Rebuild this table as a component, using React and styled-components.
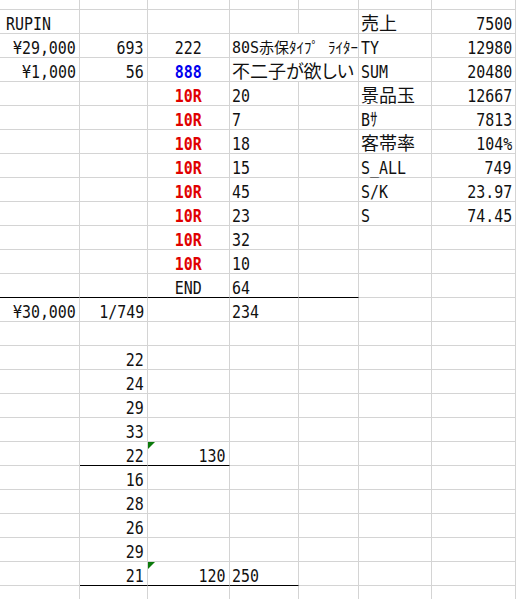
import React from 'react';
import styled, { createGlobalStyle, css } from 'styled-components';

const GlobalStyle = createGlobalStyle`
	html, body {
		margin: 0;
		padding: 0;
		background: #fff;
		overflow: hidden;
	}

	body {
		font-family: 'DejaVu Sans Mono', 'Noto Sans CJK JP', monospace;
		font-size: 18px;
		color: #111;
	}
`;

const GRID = '#d4d4d4';

const Sheet = styled.div`
	display: grid;
	grid-template-columns: 80px 68px 82px 69px 60px 73px 84px 1fr;
	grid-template-rows: 10px;
	grid-auto-rows: 24px;
	width: 100%;
	height: 599px;
	overflow: hidden;
`;

const tones = {
	red: css`
		color: #e00000;
		font-weight: bold;
	`,
	blue: css`
		color: #0000ee;
		font-weight: bold;
	`,
};

const origins = { left: 'left', right: 'right', center: 'center' };

const Cell = styled.div`
	position: relative;
	box-sizing: border-box;
	display: flex;
	align-items: flex-end;
	justify-content: ${(p) =>
		p.$align === 'right' ? 'flex-end' : p.$align === 'center' ? 'center' : 'flex-start'};
	grid-column: span ${(p) => p.$span || 1};
	padding: 0 ${(p) => (p.$align === 'right' ? '3px' : '2px')} 0 ${(p) => (p.$first ? '6px' : '2px')};
	border-right: 1px solid ${GRID};
	border-bottom: 1px solid ${(p) => (p.$rule ? '#000' : GRID)};
	line-height: 18px;
	white-space: nowrap;
	${(p) => p.$tone && tones[p.$tone]}
	${(p) =>
		p.$small &&
		css`
			font-size: 15px;
		`}
	${(p) =>
		p.$kana &&
		css`
			font-feature-settings: 'palt';
		`}
	${(p) =>
		p.$flag &&
		css`
			&::before {
				content: '';
				position: absolute;
				top: 0;
				left: 0;
				border-top: 7px solid #0b7a0b;
				border-right: 7px solid transparent;
			}
		`}
`;

// half-width characters in the sheet are 9px wide; squeeze the mono face to that
const Text = styled.span`
	display: inline-block;
	transform: ${(p) => (p.$wide ? 'none' : 'scaleX(0.83)')};
	transform-origin: ${(p) => origins[p.$align]} bottom;
`;

// one entry per row: [column index, text, options]
const rows = [
	[],
	[[0, 'RUPIN', { align: 'left' }], [5, '売上', { align: 'left', wide: true }], [6, '7500']],
	[
		[0, '¥29,000'],
		[1, '693'],
		[2, '222', { align: 'center' }],
		[3, '80S赤保ﾀｲﾌﾟ ﾗｲﾀｰ', { align: 'left', span: 2, small: true, wide: true }],
		[5, 'TY', { align: 'left' }],
		[6, '12980'],
	],
	[
		[0, '¥1,000'],
		[1, '56'],
		[2, '888', { align: 'center', tone: 'blue' }],
		[3, '不二子が欲しい', { align: 'left', span: 2, kana: true, wide: true }],
		[5, 'SUM', { align: 'left' }],
		[6, '20480'],
	],
	[[2, '10R', { align: 'center', tone: 'red' }], [3, '20', { align: 'left' }], [5, '景品玉', { align: 'left', wide: true }], [6, '12667']],
	[[2, '10R', { align: 'center', tone: 'red' }], [3, '7', { align: 'left' }], [5, 'Bｻ', { align: 'left' }], [6, '7813']],
	[[2, '10R', { align: 'center', tone: 'red' }], [3, '18', { align: 'left' }], [5, '客帯率', { align: 'left', wide: true }], [6, '104%']],
	[[2, '10R', { align: 'center', tone: 'red' }], [3, '15', { align: 'left' }], [5, 'S_ALL', { align: 'left' }], [6, '749']],
	[[2, '10R', { align: 'center', tone: 'red' }], [3, '45', { align: 'left' }], [5, 'S/K', { align: 'left' }], [6, '23.97']],
	[[2, '10R', { align: 'center', tone: 'red' }], [3, '23', { align: 'left' }], [5, 'S', { align: 'left' }], [6, '74.45']],
	[[2, '10R', { align: 'center', tone: 'red' }], [3, '32', { align: 'left' }]],
	[[2, '10R', { align: 'center', tone: 'red' }], [3, '10', { align: 'left' }]],
	[[2, 'END', { align: 'center' }], [3, '64', { align: 'left' }]],
	[[0, '¥30,000'], [1, '1/749'], [3, '234', { align: 'left' }]],
	[],
	[[1, '22']],
	[[1, '24']],
	[[1, '29']],
	[[1, '33']],
	[[1, '22'], [2, '130', { flag: true }]],
	[[1, '16']],
	[[1, '28']],
	[[1, '26']],
	[[1, '29']],
	[[1, '21'], [2, '120', { flag: true }], [3, '250', { align: 'left' }]],
	[],
];

// black bottom borders: row index -> [first col, last col]
const rules = {
	12: [0, 4],
	19: [1, 2],
	24: [1, 3],
};

function buildRow(entries, rowIndex) {
	const cells = [];
	const rule = rules[rowIndex];
	let col = 0;
	while (col < 8) {
		const entry = entries.find((e) => e[0] === col);
		const opts = (entry && entry[2]) || {};
		const span = opts.span || 1;
		const align = opts.align || 'right';
		cells.push(
			<Cell
				key={`${rowIndex}-${col}`}
				$align={align}
				$span={span}
				$tone={opts.tone}
				$small={opts.small}
				$kana={opts.kana}
				$flag={opts.flag}
				$first={col === 0}
				$rule={rule && col >= rule[0] && col <= rule[1]}
			>
				{entry && (
					<Text $align={align} $wide={opts.wide}>
						{entry[1]}
					</Text>
				)}
			</Cell>
		);
		col += span;
	}
	return cells;
}

function App() {
	return (
		<>
			<GlobalStyle />
			<Sheet>{rows.map((r, i) => buildRow(r, i))}</Sheet>
		</>
	);
}

export default App;
